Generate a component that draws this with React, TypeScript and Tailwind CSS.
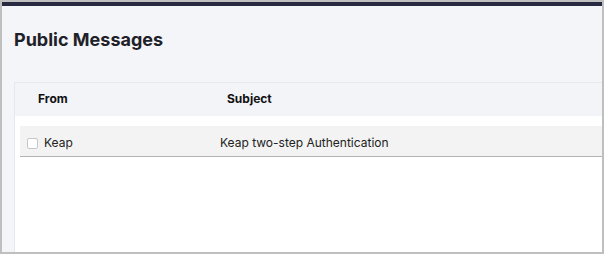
export default function App() {
    return (
        <div className="w-[604px] h-[254px] border-2 border-[#bfbfbf] bg-[#f4f5f9] flex flex-col overflow-hidden" style={{ fontFamily: "Inter, 'Liberation Sans', sans-serif" }}>
            <div className="h-[4px] bg-[#272a41] shrink-0"></div>
            <h1 className="mt-[21px] ml-[12px] text-[18px] leading-[26px] font-bold text-[#1f2128]">Public Messages</h1>
            <div className="mt-[29px] ml-[12px] flex-1 bg-white border-l border-t border-[#e6e8ee] flex flex-col">
                <div className="h-[33px] pb-[2px] bg-[#f3f4f8] flex items-center text-[12px] font-bold text-[#111]">
                    <div className="w-[212px] pl-[23px]">From</div>
                    <div>Subject</div>
                </div>
                <div className="mt-[10px] ml-[5px] h-[31px] pt-[3px] bg-[#f3f3f3] border-b border-[#b3b3b3] flex items-center text-[12px] text-[#222]">
                    <div className="w-[200px] pl-[7px] flex items-center">
                        <span className="w-[11px] h-[11px] border border-[#c7c7c7] bg-white rounded-[2px] mr-[6px] mt-[2px]"></span>
                        <span>Keap</span>
                    </div>
                    <div>Keap two-step Authentication</div>
                </div>
            </div>
        </div>
    );
}
